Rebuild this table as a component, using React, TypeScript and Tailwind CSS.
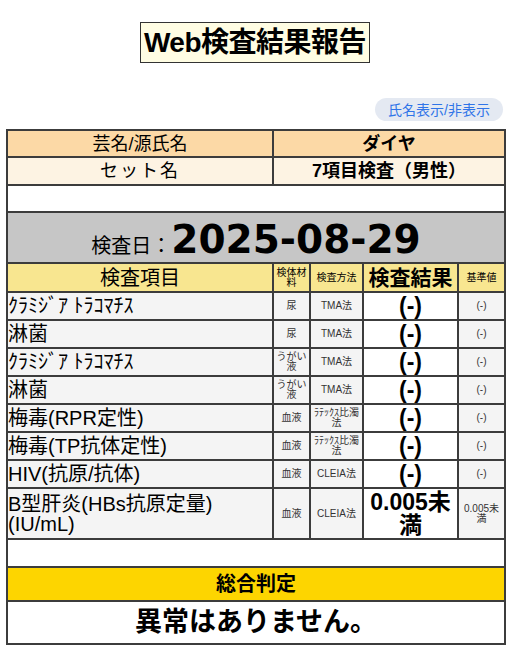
const font = { fontFamily: '"Liberation Sans", "Noto Sans CJK JP", sans-serif' };
const dateFont = { fontFamily: '"DejaVu Sans", "Noto Sans CJK JP", sans-serif' };

type Row = {
  name: React.ReactNode;
  specimen: string;
  method: string;
  result: string;
  ref: string;
  tall?: boolean;
};

const rows: Row[] = [
  { name: "ｸﾗﾐｼﾞｱ ﾄﾗｺﾏﾁｽ", specimen: "尿", method: "TMA法", result: "(-)", ref: "(-)" },
  { name: "淋菌", specimen: "尿", method: "TMA法", result: "(-)", ref: "(-)" },
  { name: "ｸﾗﾐｼﾞｱ ﾄﾗｺﾏﾁｽ", specimen: "うがい液", method: "TMA法", result: "(-)", ref: "(-)" },
  { name: "淋菌", specimen: "うがい液", method: "TMA法", result: "(-)", ref: "(-)" },
  { name: "梅毒(RPR定性)", specimen: "血液", method: "ﾗﾃｯｸｽ比濁法", result: "(-)", ref: "(-)" },
  { name: "梅毒(TP抗体定性)", specimen: "血液", method: "ﾗﾃｯｸｽ比濁法", result: "(-)", ref: "(-)" },
  { name: "HIV(抗原/抗体)", specimen: "血液", method: "CLEIA法", result: "(-)", ref: "(-)" },
  {
    name: (
      <>
        B型肝炎(HBs抗原定量)
        <br />
        (IU/mL)
      </>
    ),
    specimen: "血液",
    method: "CLEIA法",
    result: "0.005未満",
    ref: "0.005未満",
    tall: true,
  },
];

const cell = "border-2 border-[#3c3c3c] p-0 leading-none";
const small = "bg-[#f4f4f4] px-[2px] text-center text-[10px] leading-[12px] text-[#333]";

export default function App() {
  return (
    <div className="min-h-[650px] w-[510px] bg-white text-black" style={font}>
      <div className="flex justify-center pt-[22px]">
        <h1 className="flex h-[41px] w-[230px] items-center justify-center border border-[#333] bg-[#fffde3] text-[28px] font-bold leading-none tracking-[-0.5px]">
          Web検査結果報告
        </h1>
      </div>

      <div className="mt-[35px] flex justify-end pr-[7px]">
        <button className="h-[23px] w-[128px] rounded-full bg-[#e4e9f2] text-[14px] leading-none text-[#2f74e8]">
          氏名表示/非表示
        </button>
      </div>

      <div className="px-[6px] pt-[8px]">
        <table className="w-[498px] table-fixed border-collapse">
          <colgroup>
            <col className="w-[266px]" />
            <col className="w-[37px]" />
            <col className="w-[53px]" />
            <col className="w-[95px]" />
            <col className="w-[47px]" />
          </colgroup>
          <tbody>
            <tr className="h-[27px] bg-[#fcd9a6] text-[18px]">
              <td className={`${cell} text-center`}>芸名/源氏名</td>
              <td colSpan={4} className={`${cell} text-center font-bold`}>
                ダイヤ
              </td>
            </tr>
            <tr className="h-[28px] bg-[#fdf3e3] text-[18px]">
              <td className={`${cell} text-center tracking-[2px]`}>セット名</td>
              <td colSpan={4} className={`${cell} text-center font-bold`}>
                7項目検査（男性）
              </td>
            </tr>
            <tr className="h-[27px]">
              <td colSpan={5} className={cell}></td>
            </tr>
            <tr className="h-[51px] bg-[#c6c6c6]">
              <td colSpan={5} className={`${cell} pt-[4px] text-center align-middle`}>
                <span className="text-[20px]">検査日：</span>
                <span className="text-[39px] font-bold" style={dateFont}>
                  2025-08-29
                </span>
              </td>
            </tr>
            <tr className="h-[29px] bg-[#f8e690] text-center">
              <td className={`${cell} text-[20px]`}>検査項目</td>
              <td className={`${cell} px-[2px] text-[10px] leading-[12px]`}>検体材料</td>
              <td className={`${cell} text-[10px]`}>検査方法</td>
              <td className={`${cell} text-[21px] font-bold`}>検査結果</td>
              <td className={`${cell} text-[10px]`}>基準値</td>
            </tr>
            {rows.map((r, i) => (
              <tr key={i} className={r.tall ? "h-[51px]" : "h-[28px]"}>
                <td className={`${cell} bg-[#f4f4f4] text-[20px] leading-[24px]`}>{r.name}</td>
                <td className={`${cell} ${small}`}>{r.specimen}</td>
                <td className={`${cell} ${small}`}>{r.method}</td>
                <td
                  className={`${cell} bg-white text-center text-[23px] font-bold ${
                    r.tall ? "leading-[24px]" : "leading-none"
                  }`}
                >
                  {r.result}
                </td>
                <td className={`${cell} ${small}`}>{r.ref}</td>
              </tr>
            ))}
            <tr className="h-[28px]">
              <td colSpan={5} className={cell}></td>
            </tr>
            <tr className="h-[34px] bg-[#fdd500]">
              <td colSpan={5} className={`${cell} text-center text-[20px] font-bold`}>
                総合判定
              </td>
            </tr>
            <tr className="h-[43px] bg-white">
              <td colSpan={5} className={`${cell} text-center text-[27px] font-bold`}>
                異常はありません。
              </td>
            </tr>
          </tbody>
        </table>
      </div>
    </div>
  );
}
